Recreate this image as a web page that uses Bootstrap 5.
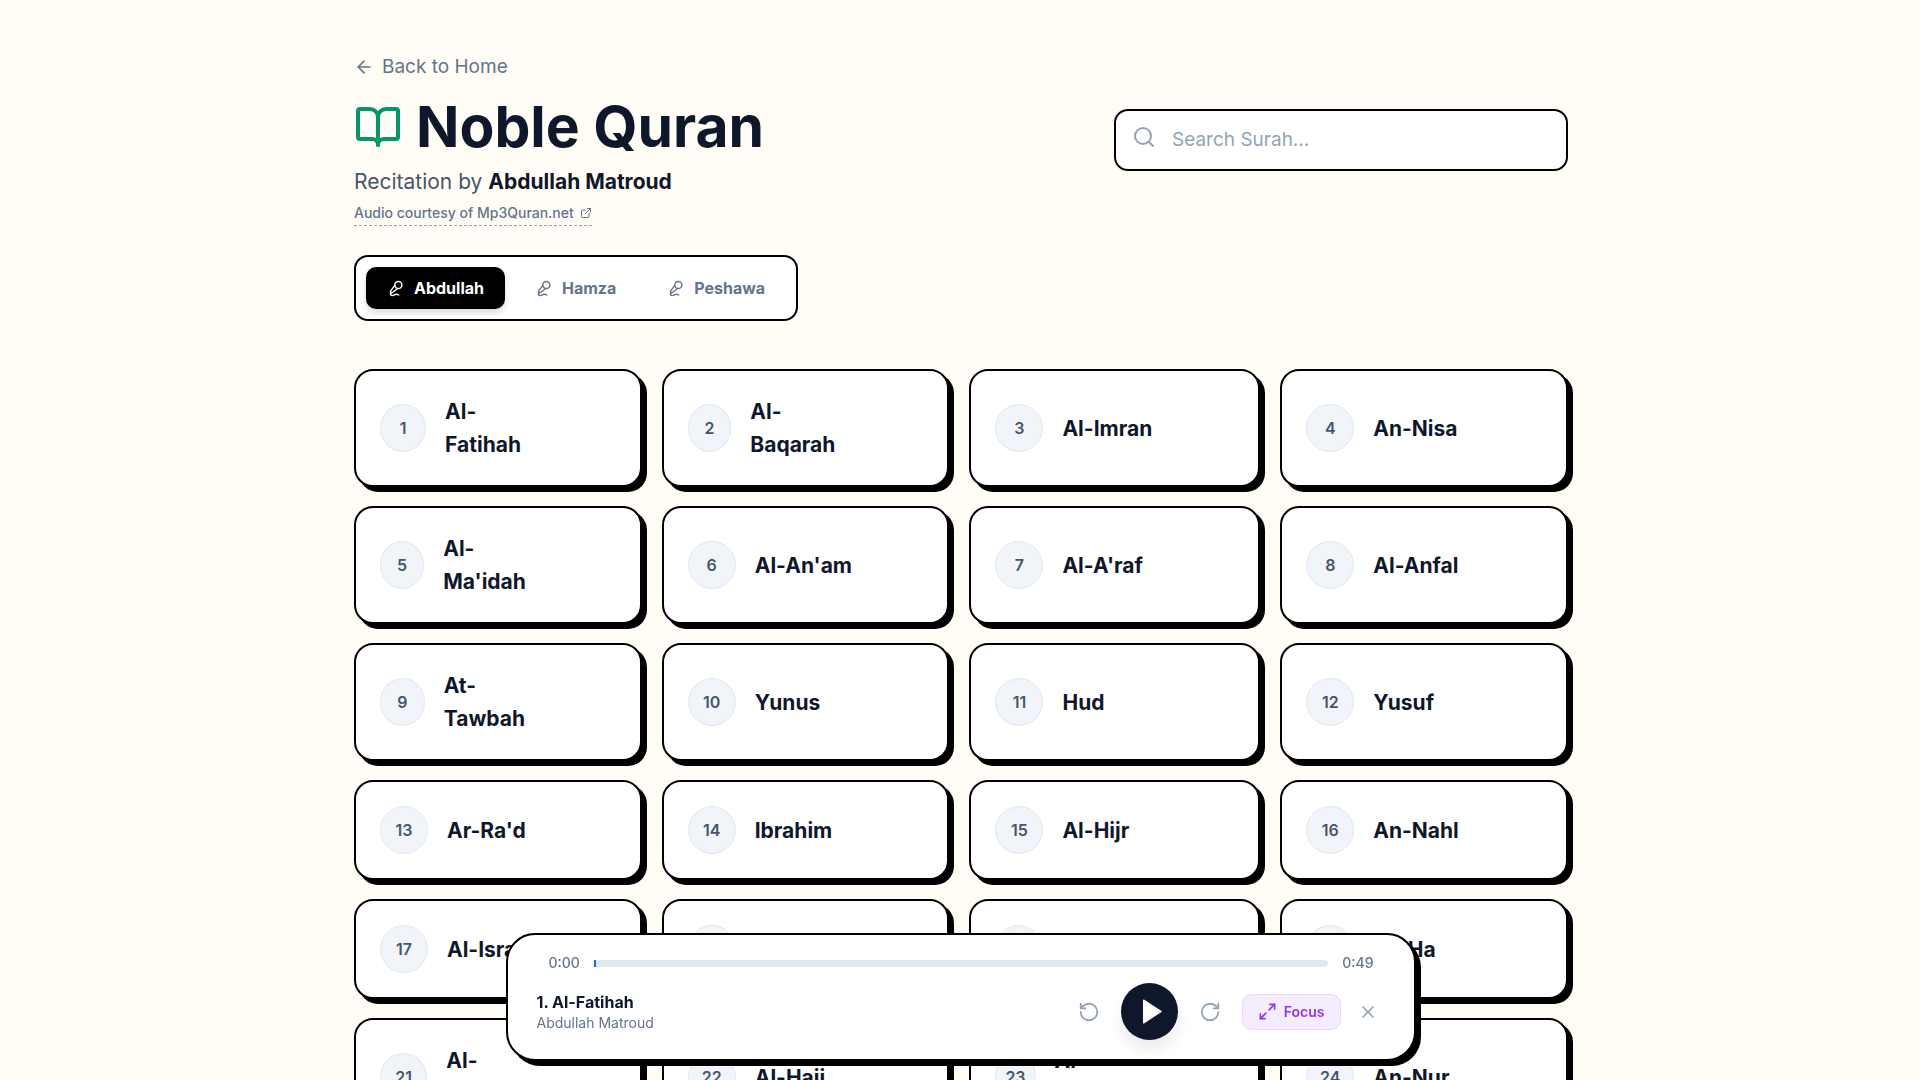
<!DOCTYPE html>
<html lang="en">
<head>
<meta charset="utf-8">
<meta name="viewport" content="width=device-width, initial-scale=1">
<title>Noble Quran</title>
<link href="https://cdn.jsdelivr.net/npm/bootstrap@5.3.0/dist/css/bootstrap.min.css" rel="stylesheet">
<style>
  body { font-family: Inter, "Liberation Sans", sans-serif; background: #fffdf5; color: #0f172a; font-size: 19px; line-height: 29px; }
  .ico { fill: none; stroke: currentColor; stroke-width: 2; stroke-linecap: round; stroke-linejoin: round; flex-shrink: 0; }
  .fit { width: fit-content; }
  .page { max-width: 1260px; padding: 52px 22px 0 24px; }
  .back-link { color: #64748b; gap: 8px; }
  .page-title { font-size: 57px; line-height: 58px; font-weight: 700; gap: 14px; margin: 17px 0 9px; }
  .page-title svg { color: #059669; }
  .reciter { font-size: 21px; line-height: 34px; color: #475569; }
  .reciter strong { color: #0f172a; font-weight: 700; }
  .credit { font-size: 14px; line-height: 20px; font-weight: 500; color: #64748b; border-bottom: 1px dashed #94a3b8; gap: 6px; margin-top: 4px; padding-bottom: 2px; }
  .search-wrap { width: 454px; max-width: 100%; margin-top: 1px; }
  .search-wrap svg { left: 18px; top: 16px; color: #94a3b8; }
  .search-box { height: 62px; border: 2px solid #000; border-radius: 14px; padding: 0 20px 0 56px; font-size: 19px; color: #0f172a; }
  .search-box::placeholder { color: #94a3b8; opacity: 1; }
  .tabs { border: 2px solid #000; border-radius: 14px; background: #fff; padding: 10px; margin-top: 29px; gap: 9px; }
  .tab-btn { --bs-btn-color: #64748b; --bs-btn-border-width: 0; --bs-btn-border-radius: 10px; --bs-btn-padding-x: 21px; --bs-btn-padding-y: 9px; --bs-btn-font-size: 16px; --bs-btn-line-height: 24px; --bs-btn-font-weight: 700; --bs-btn-active-bg: #000; --bs-btn-active-color: #fff; gap: 10px; }
  .tab-btn.active { box-shadow: 0 4px 7px rgba(0,0,0,.14); }
  .surah-grid { display: grid; grid-template-columns: repeat(4, 1fr); gap: 19px 20px; margin-top: 48px; padding-bottom: 170px; }
  .surah { background: #fff; border: 2px solid #000; border-radius: 19px; box-shadow: 5px 5px 0 #000; padding: 24px 92px 24px 24px; gap: 19px; color: #0f172a; }
  .surah-num { width: 48px; height: 48px; border-radius: 50%; background: #f1f5f9; border: 1px solid #e2e8f0; color: #475569; font-size: 16px; font-weight: 600; }
  .surah-name { font-size: 21px; line-height: 33px; font-weight: 700; }
  .player { width: 910px; max-width: calc(100% - 32px); bottom: 19px; left: 1px; right: 0; margin: 0 auto; background: #fff; border: 2px solid #000; border-radius: 29px; box-shadow: 5px 5px 0 #000; padding: 18px 28px 19px 29px; z-index: 10; }
  .times { font-size: 14px; line-height: 20px; font-weight: 500; color: #64748b; gap: 14px; padding: 0 12px; margin-bottom: 10px; }
  .seek { appearance: none; -webkit-appearance: none; height: 7px; background: #e2e8f0; border-radius: 0 4px 4px 0; margin: 0; min-width: 0; }
  .seek::-webkit-slider-thumb { -webkit-appearance: none; width: 2px; height: 7px; background: #2563eb; }
  .now-title { font-size: 16px; line-height: 22px; font-weight: 700; }
  .now-by { font-size: 14px; line-height: 19px; color: #64748b; }
  .plain-btn { border: 0; background: none; padding: 0; color: #94a3b8; }
  .play-btn { width: 57px; height: 57px; border: 0; border-radius: 50%; background: #0f172a; color: #fff; box-shadow: 0 10px 14px rgba(0,0,0,.08); padding: 0 0 0 5px; margin: 0 21px; }
  .focus-btn { --bs-btn-color: #9333ea; --bs-btn-bg: #f5edff; --bs-btn-border-color: #e9d5ff; --bs-btn-border-radius: 10px; --bs-btn-padding-x: 15px; --bs-btn-padding-y: 7px; --bs-btn-font-size: 14px; --bs-btn-line-height: 20px; --bs-btn-font-weight: 600; gap: 7px; margin: 0 17px 0 21px; }
  @media (max-width: 991px) { .surah-grid { grid-template-columns: repeat(2, 1fr); } }
</style>
</head>
<body>
<svg class="d-none">
  <symbol id="mic" viewBox="0 0 24 24"><path d="m11 7.601-5.994 8.19a1 1 0 0 0 .1 1.298l.817.818a1 1 0 0 0 1.314.087L15.09 12"/><path d="M16.5 21.174C15.5 20.5 14.372 20 13 20c-2.058 0-3.928 2.356-6 2-2.072-.356-2.775-3.369-1.5-4.5"/><circle cx="16" cy="7" r="5"/></symbol>
</svg>
<main class="page container-fluid mx-auto">
  <header class="d-flex flex-wrap justify-content-between align-items-center">
    <div>
      <a href="#" class="back-link fit d-flex align-items-center text-decoration-none"><svg class="ico" width="20" height="20" viewBox="0 0 24 24"><path d="m12 19-7-7 7-7"/><path d="M19 12H5"/></svg>Back to Home</a>
      <h1 class="page-title d-flex align-items-center"><svg class="ico" width="48" height="48" viewBox="0 0 24 24"><path d="M12 7v14"/><path d="M3 18a1 1 0 0 1-1-1V4a1 1 0 0 1 1-1h5a4 4 0 0 1 4 4 4 4 0 0 1 4-4h5a1 1 0 0 1 1 1v13a1 1 0 0 1-1 1h-6a3 3 0 0 0-3 3 3 3 0 0 0-3-3z"/></svg>Noble Quran</h1>
      <p class="reciter mb-0">Recitation by <strong>Abdullah Matroud</strong></p>
      <a href="#" class="credit fit d-flex align-items-center text-decoration-none">Audio courtesy of Mp3Quran.net<svg class="ico" width="12" height="12" viewBox="0 0 24 24"><path d="M15 3h6v6"/><path d="M10 14 21 3"/><path d="M18 13v6a2 2 0 0 1-2 2H5a2 2 0 0 1-2-2V8a2 2 0 0 1 2-2h6"/></svg></a>
    </div>
    <div class="search-wrap position-relative">
      <svg class="ico position-absolute" width="24" height="24" viewBox="0 0 24 24"><circle cx="11" cy="11" r="8"/><path d="m21 21-4.3-4.3"/></svg>
      <input type="text" class="search-box w-100 bg-white" placeholder="Search Surah..." aria-label="Search Surah">
    </div>
  </header>
  <div class="tabs fit d-flex">
    <button type="button" class="btn tab-btn active d-flex align-items-center"><svg class="ico" width="17" height="17"><use href="#mic"/></svg>Abdullah</button>
    <button type="button" class="btn tab-btn d-flex align-items-center"><svg class="ico" width="17" height="17"><use href="#mic"/></svg>Hamza</button>
    <button type="button" class="btn tab-btn d-flex align-items-center"><svg class="ico" width="17" height="17"><use href="#mic"/></svg>Peshawa</button>
  </div>
  <section class="surah-grid">
    <a href="#" class="surah d-flex align-items-center text-decoration-none"><span class="surah-num d-flex align-items-center justify-content-center">1</span><span class="surah-name">Al-Fatihah</span></a>
    <a href="#" class="surah d-flex align-items-center text-decoration-none"><span class="surah-num d-flex align-items-center justify-content-center">2</span><span class="surah-name">Al-Baqarah</span></a>
    <a href="#" class="surah d-flex align-items-center text-decoration-none"><span class="surah-num d-flex align-items-center justify-content-center">3</span><span class="surah-name">Al-Imran</span></a>
    <a href="#" class="surah d-flex align-items-center text-decoration-none"><span class="surah-num d-flex align-items-center justify-content-center">4</span><span class="surah-name">An-Nisa</span></a>
    <a href="#" class="surah d-flex align-items-center text-decoration-none"><span class="surah-num d-flex align-items-center justify-content-center">5</span><span class="surah-name">Al-Ma'idah</span></a>
    <a href="#" class="surah d-flex align-items-center text-decoration-none"><span class="surah-num d-flex align-items-center justify-content-center">6</span><span class="surah-name">Al-An'am</span></a>
    <a href="#" class="surah d-flex align-items-center text-decoration-none"><span class="surah-num d-flex align-items-center justify-content-center">7</span><span class="surah-name">Al-A'raf</span></a>
    <a href="#" class="surah d-flex align-items-center text-decoration-none"><span class="surah-num d-flex align-items-center justify-content-center">8</span><span class="surah-name">Al-Anfal</span></a>
    <a href="#" class="surah d-flex align-items-center text-decoration-none"><span class="surah-num d-flex align-items-center justify-content-center">9</span><span class="surah-name">At-Tawbah</span></a>
    <a href="#" class="surah d-flex align-items-center text-decoration-none"><span class="surah-num d-flex align-items-center justify-content-center">10</span><span class="surah-name">Yunus</span></a>
    <a href="#" class="surah d-flex align-items-center text-decoration-none"><span class="surah-num d-flex align-items-center justify-content-center">11</span><span class="surah-name">Hud</span></a>
    <a href="#" class="surah d-flex align-items-center text-decoration-none"><span class="surah-num d-flex align-items-center justify-content-center">12</span><span class="surah-name">Yusuf</span></a>
    <a href="#" class="surah d-flex align-items-center text-decoration-none"><span class="surah-num d-flex align-items-center justify-content-center">13</span><span class="surah-name">Ar-Ra'd</span></a>
    <a href="#" class="surah d-flex align-items-center text-decoration-none"><span class="surah-num d-flex align-items-center justify-content-center">14</span><span class="surah-name">Ibrahim</span></a>
    <a href="#" class="surah d-flex align-items-center text-decoration-none"><span class="surah-num d-flex align-items-center justify-content-center">15</span><span class="surah-name">Al-Hijr</span></a>
    <a href="#" class="surah d-flex align-items-center text-decoration-none"><span class="surah-num d-flex align-items-center justify-content-center">16</span><span class="surah-name">An-Nahl</span></a>
    <a href="#" class="surah d-flex align-items-center text-decoration-none"><span class="surah-num d-flex align-items-center justify-content-center">17</span><span class="surah-name">Al-Isra</span></a>
    <a href="#" class="surah d-flex align-items-center text-decoration-none"><span class="surah-num d-flex align-items-center justify-content-center">18</span><span class="surah-name">Al-Kahf</span></a>
    <a href="#" class="surah d-flex align-items-center text-decoration-none"><span class="surah-num d-flex align-items-center justify-content-center">19</span><span class="surah-name">Maryam</span></a>
    <a href="#" class="surah d-flex align-items-center text-decoration-none"><span class="surah-num d-flex align-items-center justify-content-center">20</span><span class="surah-name">Ta-Ha</span></a>
    <a href="#" class="surah d-flex align-items-center text-decoration-none"><span class="surah-num d-flex align-items-center justify-content-center">21</span><span class="surah-name">Al-Anbiya</span></a>
    <a href="#" class="surah d-flex align-items-center text-decoration-none"><span class="surah-num d-flex align-items-center justify-content-center">22</span><span class="surah-name">Al-Hajj</span></a>
    <a href="#" class="surah d-flex align-items-center text-decoration-none"><span class="surah-num d-flex align-items-center justify-content-center">23</span><span class="surah-name">Al-Mu'minun</span></a>
    <a href="#" class="surah d-flex align-items-center text-decoration-none"><span class="surah-num d-flex align-items-center justify-content-center">24</span><span class="surah-name">An-Nur</span></a>
  </section>
</main>
<section class="player position-fixed" aria-label="Player">
  <div class="times d-flex align-items-center">
    <span>0:00</span>
    <input type="range" class="seek flex-grow-1" min="0" max="49" value="0" aria-label="Seek">
    <span>0:49</span>
  </div>
  <div class="d-flex justify-content-between align-items-center">
    <div>
      <div class="now-title">1. Al-Fatihah</div>
      <div class="now-by">Abdullah Matroud</div>
    </div>
    <div class="d-flex align-items-center pe-2">
      <button type="button" class="plain-btn d-flex" aria-label="Back 10 seconds"><svg class="ico" width="22" height="22" viewBox="0 0 24 24"><path d="M3 12a9 9 0 1 0 9-9 9.750 9.750 0 0 0-6.740 2.740L3 8"/><path d="M3 3v5h5"/></svg></button>
      <button type="button" class="play-btn d-flex align-items-center justify-content-center" aria-label="Play"><svg width="29" height="29" viewBox="0 0 24 24" fill="currentColor" stroke="currentColor" stroke-width="1" stroke-linejoin="round"><path d="M5.500 2.500 20 12 5.500 21.500z"/></svg></button>
      <button type="button" class="plain-btn d-flex" aria-label="Forward 10 seconds"><svg class="ico" width="22" height="22" viewBox="0 0 24 24"><path d="M21 12a9 9 0 1 1-9-9c2.520 0 4.930 1 6.740 2.740L21 8"/><path d="M21 3v5h-5"/></svg></button>
      <button type="button" class="btn focus-btn d-flex align-items-center"><svg class="ico" width="19" height="19" viewBox="0 0 24 24"><path d="M15 3h6v6"/><path d="m21 3-7 7"/><path d="m3 21 7-7"/><path d="M9 21H3v-6"/></svg>Focus</button>
      <button type="button" class="plain-btn d-flex" aria-label="Close"><svg class="ico" width="20" height="20" viewBox="0 0 24 24"><path d="M18 6 6 18"/><path d="m6 6 12 12"/></svg></button>
    </div>
  </div>
</section>
<script src="https://cdn.jsdelivr.net/npm/bootstrap@5.3.0/dist/js/bootstrap.bundle.min.js"></script>
</body>
</html>
